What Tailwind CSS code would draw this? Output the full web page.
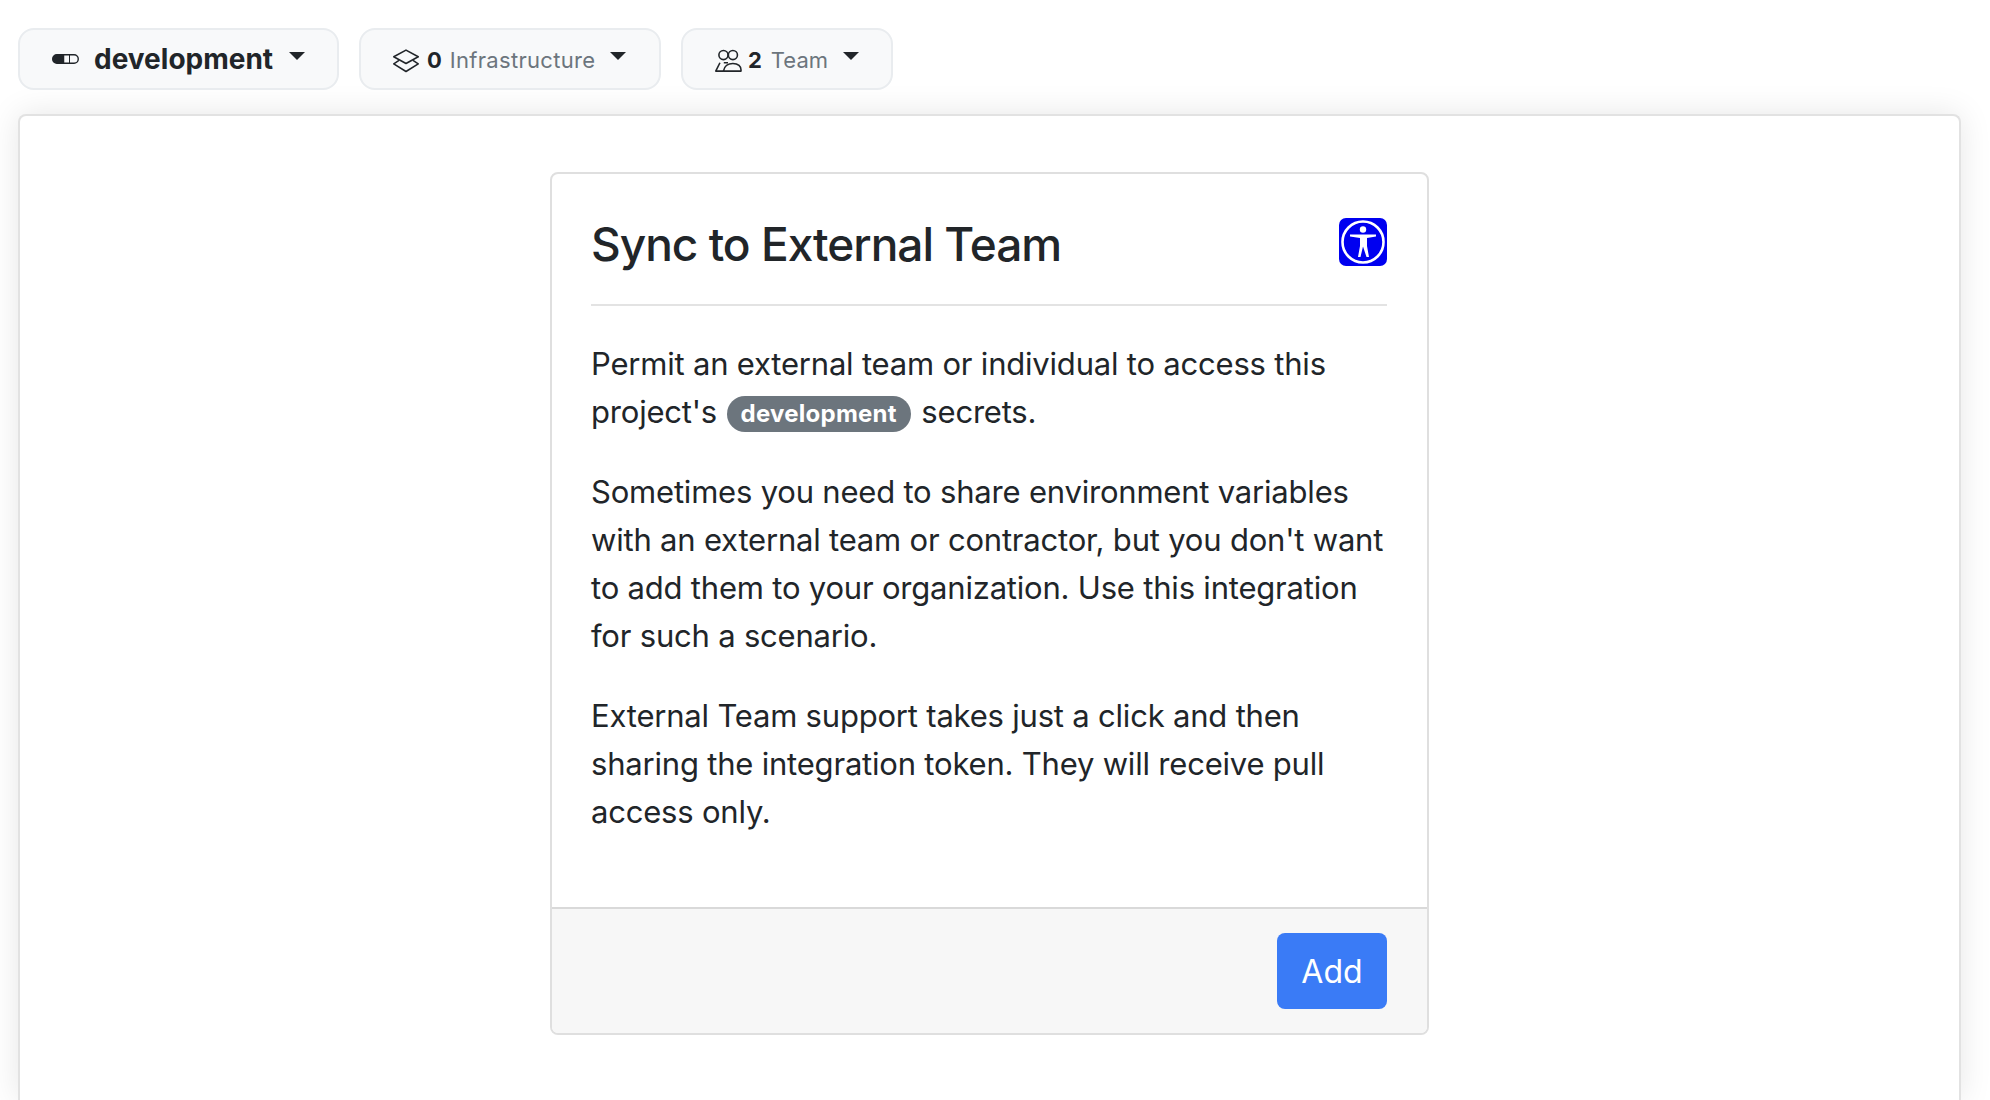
<!DOCTYPE html>
<html><head><meta charset="utf-8"><script src="https://cdn.jsdelivr.net/npm/@tailwindcss/browser@4"></script></head>
<body class="bg-white h-[1100px] overflow-hidden font-['Inter',sans-serif] text-[#212529]">
<div class="px-[18px] pt-[28px]">
  <div class="flex h-[62px]">
    <div class="w-[321px] h-[62px] rounded-[16px] border-2 border-[#e9ecef] bg-[#f8f9fa] flex items-center pl-[32px]">
      <svg class="w-[28px] h-[28px] mr-[14px]" viewBox="0 0 16 16" fill="#212529"><rect x=".4" y="5.6" width="14.6" height="4.8" rx="2.4" fill="none" stroke="#212529" stroke-width=".8"/><path d="M2.8 5.6H7v4.8H2.8a2.4 2.4 0 0 1 0-4.8z"/><path d="M10 5.6v4.8" stroke="#212529" stroke-width=".6"/></svg>
      <span class="text-[28px] font-bold leading-none">development</span>
      <span class="ml-[16px] mb-[6px] w-0 h-0 border-x-[8px] border-x-transparent border-t-[8px] border-t-[#212529]"></span>
    </div>
    <div class="ml-[20px] w-[302px] h-[62px] rounded-[16px] border-2 border-[#e9ecef] bg-[#f8f9fa] flex items-center pl-[31px]">
      <svg class="w-[28px] h-[28px] mr-[7px] mt-[3px]" viewBox="0 0 16 16" fill="none" stroke="#212529" stroke-width=".9" stroke-linejoin="round"><path d="M8 1.8 15 5.6 8 9.4 1 5.6z"/><path d="M4 7.6 1 9.6 8 14 15 9.6 12 7.6"/></svg>
      <span class="text-[22px] font-bold leading-none mt-[2px]">0</span>
      <span class="text-[22px] ml-[8px] text-[#6c757d] leading-none tracking-[0.3px] mt-[2px]">Infrastructure</span>
      <span class="ml-[15px] mb-[6px] w-0 h-0 border-x-[8px] border-x-transparent border-t-[8px] border-t-[#212529]"></span>
    </div>
    <div class="ml-[20px] w-[212px] h-[62px] rounded-[16px] border-2 border-[#e9ecef] bg-[#f8f9fa] flex items-center pl-[31px]">
      <svg class="w-[28px] h-[28px] mr-[6px] mt-[3px]" viewBox="0 0 16 16" fill="none" stroke="#212529" stroke-width=".9" stroke-linejoin="round"><circle cx="5.4" cy="4.6" r="2.6"/><circle cx="10.8" cy="4.6" r="2.6"/><path d="M5.6 9H8M3.4 9 1 13.8h4.2"/><path d="M5.4 13.8C5.8 11 8 9.4 10.8 9.4s5 1.6 4.6 4.4z"/></svg>
      <span class="text-[22px] font-bold leading-none mt-[2px]">2</span>
      <span class="text-[22px] ml-[9px] text-[#6c757d] leading-none mt-[2px]">Team</span>
      <span class="ml-[15px] mb-[6px] w-0 h-0 border-x-[8px] border-x-transparent border-t-[8px] border-t-[#212529]"></span>
    </div>
  </div>
  <div class="mt-[24px] w-[1943px] h-[986px] rounded-t-[8px] border-2 border-b-0 border-[#e2e2e2] bg-white shadow-[0_0_32px_rgba(0,0,0,0.1)] pt-[56px] pl-[530px]">
    <div class="w-[879px] h-[863px] rounded-[8px] border-2 border-[#dfdfdf] flex flex-col overflow-hidden">
      <div class="flex-1 pl-[39px] pr-[40px] pt-[43px]">
        <div class="flex justify-between items-start border-b-2 border-[#e3e3e3] h-[89px]">
          <h1 class="text-[46px] font-medium leading-[54px] tracking-[-1px]">Sync to External Team</h1>
          <svg class="w-[48px] h-[48px] mt-[1px]" viewBox="0 0 48 48"><rect width="48" height="48" rx="7" fill="#0000f0"/><circle cx="24" cy="24" r="20.5" fill="none" stroke="#fff" stroke-width="2.6"/><circle cx="24" cy="11.5" r="3.2" fill="#fff"/><path d="M11 16.5h26v2l-9 1.5V28l2 11h-2.5L24 28.5 21.5 39H19l2-11v-8l-10-1.5z" fill="#fff"/></svg>
        </div>
        <div class="text-[31px] tracking-[-0.2px] leading-[48px] pt-[34px]">
          <p class="mb-[32px]">Permit an external team or individual to access this project's <span class="inline-block align-[1px] h-[36px] leading-[36px] px-[14px] ml-[1px] mr-[2px] rounded-full bg-[#6c757d] text-white text-[24px] font-bold tracking-[0.25px]">development</span> secrets.</p>
          <p class="mb-[32px]">Sometimes you need to share environment variables with an external team or contractor, but you don't want to add them to your organization. Use this integration for such a scenario.</p>
          <p>External Team support takes just a click and then sharing the integration token. They will receive pull access only.</p>
        </div>
      </div>
      <div class="h-[126px] border-t-2 border-[#d9d9d9] bg-[#f7f7f7] flex justify-end items-start pt-[24px] pr-[40px]">
        <button class="w-[110px] h-[76px] rounded-[8px] bg-[#3a7bf6] text-white text-[32px] leading-none pt-[2px]">Add</button>
      </div>
    </div>
  </div>
</div>
</body></html>
